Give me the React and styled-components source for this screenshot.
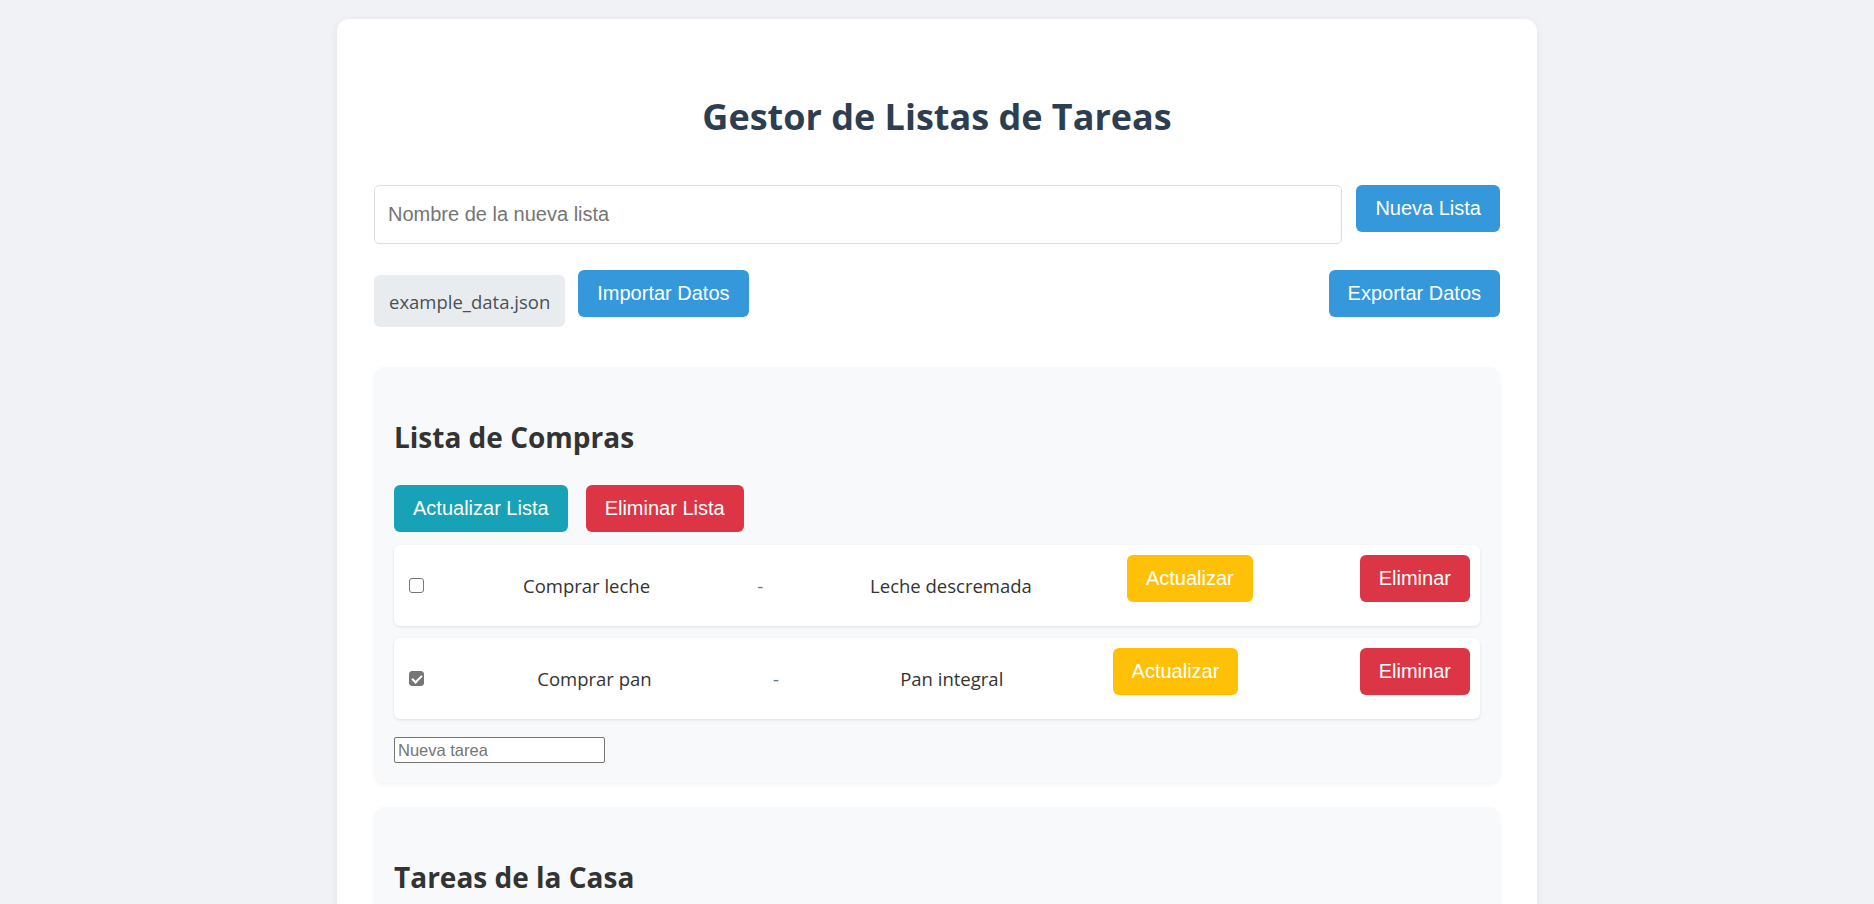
import styled, { createGlobalStyle, css } from "styled-components";

const GlobalStyle = createGlobalStyle`
  * {
    box-sizing: border-box;
  }

  body {
    margin: 0;
    background: #f0f2f5;
    font-family: "Open Sans", "Noto Sans", sans-serif;
    color: #333;
  }
`;

const Container = styled.div`
  width: 1200px;
  margin: 19px auto 0;
  padding: 37px;
  background: #ffffff;
  border-radius: 12px;
  box-shadow: 0 2px 10px rgba(0, 0, 0, 0.06);
`;

const Title = styled.h1`
  margin: 39px 0 47px;
  text-align: center;
  font-size: 36px;
  line-height: 43px;
  font-weight: 700;
  color: #2c3e50;
`;

const NewListRow = styled.div`
  display: flex;
  align-items: flex-start;
  gap: 14px;
`;

const NameInput = styled.input`
  flex: 1;
  height: 59px;
  padding: 0 13px;
  border: 1px solid #ddd;
  border-radius: 5px;
  font-family: "Liberation Sans", Arial, sans-serif;
  font-size: 20px;
  color: #333;

  &::placeholder {
    color: #757575;
  }
`;

const variants = {
  primary: "#3498db",
  info: "#17a2b8",
  danger: "#dc3545",
  warning: "#ffc107",
};

const Button = styled.button`
  height: 47px;
  padding: 0 19px;
  border: none;
  border-radius: 6px;
  background: ${(p) => variants[p.$variant || "primary"]};
  color: #ffffff;
  font-family: "Liberation Sans", Arial, sans-serif;
  font-size: 20px;
  white-space: nowrap;
  cursor: pointer;
  flex-shrink: 0;

  ${(p) =>
    p.$inRow &&
    css`
      margin-bottom: 14px;
    `}
`;

const Toolbar = styled.div`
  display: flex;
  justify-content: space-between;
  align-items: flex-start;
  margin-top: 26px;
`;

const FileGroup = styled.div`
  display: flex;
  align-items: flex-start;
  gap: 13px;
`;

const FileChip = styled.span`
  display: flex;
  align-items: center;
  height: 52px;
  margin-top: 5px;
  padding: 0 15px;
  background: #e9ecef;
  border-radius: 6px;
  font-size: 18.5px;
  color: #495057;
`;

const Lists = styled.div`
  margin-top: 40px;
`;

const ListCard = styled.section`
  margin-bottom: 24px;
  padding: 20px;
  background: #f8f9fa;
  border-radius: 10px;
  box-shadow: 0 2px 4px rgba(0, 0, 0, 0.05);
`;

const ListTitle = styled.h2`
  margin: 33px 0 31px;
  font-size: 28px;
  line-height: 34px;
  font-weight: 700;
  color: #333;
`;

const ListActions = styled.div`
  display: flex;
  gap: 18px;
  margin-bottom: 13px;
`;

const TaskRow = styled.div`
  display: flex;
  align-items: center;
  justify-content: space-between;
  margin-bottom: 12px;
  padding: 10px;
  background: #ffffff;
  border-radius: 6px;
  box-shadow: 0 1px 3px rgba(0, 0, 0, 0.1);
`;

const Check = styled.input.attrs({ type: "checkbox" })`
  appearance: none;
  position: relative;
  width: 15px;
  height: 15px;
  margin: 0 4px 0 5px;
  border: 1px solid #767676;
  border-radius: 3px;
  background: #ffffff;
  flex-shrink: 0;

  &:checked {
    background: #767676;
  }

  &:checked::after {
    content: "";
    position: absolute;
    left: 4px;
    top: 1px;
    width: 4px;
    height: 8px;
    border: solid #ffffff;
    border-width: 0 2px 2px 0;
    transform: rotate(45deg);
  }
`;

const TaskText = styled.span`
  font-size: 18.5px;
  color: #333;
`;

const Separator = styled.span`
  margin: 0 12px;
  font-size: 18.5px;
  color: #6c757d;
`;

const NewTaskInput = styled.input`
  display: block;
  width: 211px;
  height: 26px;
  margin-top: 18px;
  padding: 1px 3px;
  border: 1px solid #767676;
  border-radius: 2px;
  background: #ffffff;
  font-family: "Liberation Sans", Arial, sans-serif;
  font-size: 16.5px;

  &::placeholder {
    color: #757575;
  }
`;

const lists = [
  {
    name: "Lista de Compras",
    tasks: [
      { title: "Comprar leche", desc: "Leche descremada", done: false },
      { title: "Comprar pan", desc: "Pan integral", done: true },
    ],
  },
  {
    name: "Tareas de la Casa",
    tasks: [
      { title: "Lavar platos", desc: "Después de la cena", done: false },
      { title: "Sacar la basura", desc: "Martes y jueves", done: false },
    ],
  },
];

const Task = ({ task }) => (
  <TaskRow>
    <Check defaultChecked={task.done} />
    <TaskText>{task.title}</TaskText>
    <Separator>-</Separator>
    <TaskText>{task.desc}</TaskText>
    <Button $variant="warning" $inRow style={{ marginRight: "12px" }}>
      Actualizar
    </Button>
    <Button $variant="danger" $inRow>
      Eliminar
    </Button>
  </TaskRow>
);

const TaskList = ({ list }) => (
  <ListCard>
    <ListTitle>{list.name}</ListTitle>
    <ListActions>
      <Button $variant="info">Actualizar Lista</Button>
      <Button $variant="danger">Eliminar Lista</Button>
    </ListActions>
    {list.tasks.map((task) => (
      <Task key={task.title} task={task} />
    ))}
    <NewTaskInput placeholder="Nueva tarea" />
  </ListCard>
);

export default function App() {
  return (
    <>
      <GlobalStyle />
      <Container>
        <Title>Gestor de Listas de Tareas</Title>
        <NewListRow>
          <NameInput placeholder="Nombre de la nueva lista" />
          <Button>Nueva Lista</Button>
        </NewListRow>
        <Toolbar>
          <FileGroup>
            <FileChip>example_data.json</FileChip>
            <Button>Importar Datos</Button>
          </FileGroup>
          <Button>Exportar Datos</Button>
        </Toolbar>
        <Lists>
          {lists.map((list) => (
            <TaskList key={list.name} list={list} />
          ))}
        </Lists>
      </Container>
    </>
  );
}
